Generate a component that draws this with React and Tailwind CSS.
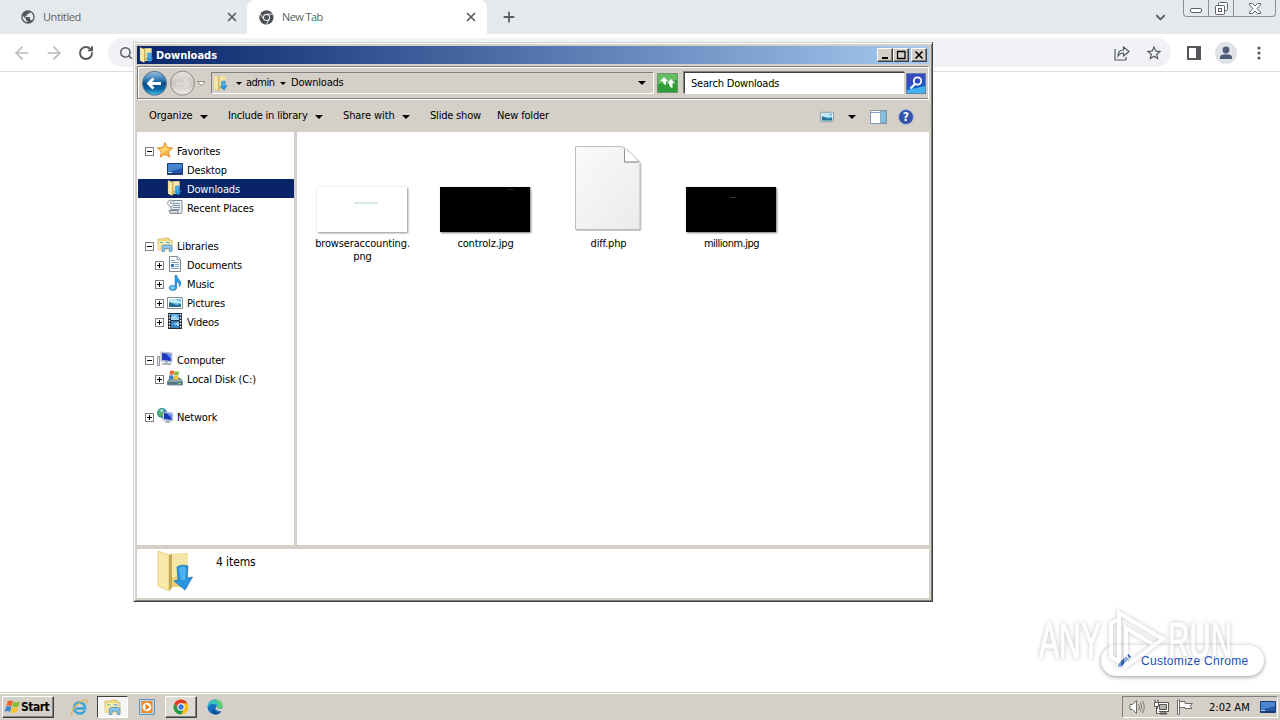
import { ArrowLeft, ArrowRight, ChevronDown, Plus, RotateCw, Search, X } from 'lucide-react';
import { MdOutlineStarBorder, MdPublic } from 'react-icons/md';

const tahoma = "font-['DejaVu_Sans_Condensed','DejaVu_Sans',sans-serif] [font-stretch:condensed]";

function FolderDownIcon({ className }) {
  return (
    <svg className={className} viewBox="0 0 36 42">
      <path d="M12 4L31 3V37H12Z" fill="#e8cf78" />
      <path d="M12 4L31 3V20L12 30Z" fill="#f5e6a8" />
      <path d="M1 1L12 5V41L1 36Z" fill="#f8e9a8" stroke="#dcc36f" strokeWidth="0.7" />
      <path d="M12 5L15 4V38L12 41Z" fill="#c2a856" />
      <path d="M20 17Q24 14 31 16L30 28L35.5 27L28 40L17 31L21 30Z" fill="#2796de" stroke="#1670b8" strokeWidth="0.7" />
      <path d="M22 18Q26 15 29 18L28 30L24 30Z" fill="#4fb3ef" />
    </svg>
  );
}

function LibraryIcon({ className }) {
  return (
    <svg className={className} viewBox="0 0 16 16">
      <path d="M1 2H6L7 1H12V3H15V13H1Z" fill="#f1d980" stroke="#caa94d" strokeWidth="0.6" />
      <path d="M2 4H14V7H2Z" fill="#fbf2c0" />
      <path d="M3 5H6V6H3Z" fill="#58b36b" />
      <path d="M9 5H13V6H9Z" fill="#5b9fdc" />
      <path d="M1 7H15V13H1Z" fill="#f5e49c" />
      <path d="M5 14.5V10Q5 8 7 8H13Q15 8 15 10V14.5H12.5V11.5H7.5V14.5Z" fill="#8cc5ea" stroke="#4489bd" strokeWidth="0.7" />
    </svg>
  );
}

function StarIcon() {
  return (
    <svg className="size-4" viewBox="0 0 16 16">
      <path d="M8 0.5L10.2 5.4L15.7 6L11.6 9.7L12.8 15.2L8 12.4L3.2 15.2L4.4 9.7L0.3 6L5.8 5.4Z" fill="#fdb844" stroke="#d9822b" strokeWidth="0.8" />
      <path d="M8 3L9.4 6.4L13 7L8 9L4.5 12L5.5 9L3 7L6.6 6.4Z" fill="#ffd97c" />
    </svg>
  );
}

function DesktopIcon() {
  return (
    <svg className="size-4" viewBox="0 0 16 16">
      <path d="M0.5 2.5H15.5V13.5H0.5Z" fill="#2458a8" stroke="#183b78" />
      <path d="M1 3H15V7L1 11Z" fill="#4a86cf" />
      <path d="M1 11H5V12H1Z" fill="#b9d8f5" />
      <path d="M1 12H15V13H1Z" fill="#1a3a6e" />
    </svg>
  );
}

function RecentIcon() {
  return (
    <svg className="size-4" viewBox="0 0 16 16">
      <path d="M4 1.5H15V12.5Q15 14.5 13 14.5H4Z" fill="#eef1f4" stroke="#7e8892" />
      <path d="M7 4.5H13M7 6.5H13M6 8.5H13M5 10.5H13" stroke="#7d95ad" />
      <path d="M2 11.5H11V14.5H3Z" fill="#d5d9dd" stroke="#7e8892" />
      <circle cx="3.8" cy="4.3" r="3.2" fill="#f5f7f9" stroke="#939da6" />
      <path d="M3.8 2.5V4.5H5.3" stroke="#60707f" fill="none" strokeWidth="0.8" />
    </svg>
  );
}

function DocumentIcon() {
  return (
    <svg className="size-4" viewBox="0 0 16 16">
      <path d="M2.5 0.5H10.5L13.5 3.5V15.5H2.5Z" fill="#fff" stroke="#7d8791" />
      <path d="M10 1V4H13" fill="#d9e1e8" stroke="#7d8791" strokeWidth="0.7" />
      <path d="M4 4.5H8M4 6.5H12M8 8.5H12M8 10.5H12M4 12.5H12" stroke="#7fa3c6" />
      <path d="M4 8H7V11H4Z" fill="#3b78b8" />
    </svg>
  );
}

function MusicIcon() {
  return (
    <svg className="size-4" viewBox="0 0 16 16">
      <path d="M8 0H9.5Q10 3 12.5 5Q15.5 8 12.5 12Q13 8 9.8 6.5V13Q9 16 5 15.5Q1 14.5 2.5 11.5Q4.5 9.5 8 11Z" fill="#2c9ae0" stroke="#196cae" strokeWidth="0.5" />
      <ellipse cx="5.5" cy="12.7" rx="2.4" ry="1.8" fill="#7ccaf5" />
    </svg>
  );
}

function PictureIcon({ className }) {
  return (
    <svg className={className} viewBox="0 0 16 14">
      <path d="M0.5 1.5H15.5V12.5H0.5Z" fill="#fff" stroke="#7f8d99" />
      <path d="M2 3H14V11H2Z" fill="#6ec2e6" />
      <path d="M2 3H8L14 6V7H2Z" fill="#bfe7f5" />
      <path d="M2 6Q6 7 9 9L14 8V11H2Z" fill="#246f92" />
    </svg>
  );
}

function VideoIcon() {
  return (
    <svg className="size-4" viewBox="0 0 16 16">
      <path d="M1 0H15V16H1Z" fill="#22303d" />
      <path d="M4 1H12V7H4Z" fill="#5fa8df" />
      <path d="M4 8H12V15H4Z" fill="#3b84c4" />
      <path d="M4 4L8 2L12 6V7H4ZM6 11L12 9V13Z" fill="#a3d2ef" />
      <path d="M2.5 1V16M13.5 1V16" stroke="#fff" strokeWidth="1.3" strokeDasharray="1.5 1.5" />
    </svg>
  );
}

function ComputerIcon() {
  return (
    <svg className="size-4" viewBox="0 0 16 16">
      <path d="M0.5 5.5H2.5V14.5H0.5Z" fill="#dfe3e8" stroke="#7c8590" strokeWidth="0.8" />
      <path d="M4 1L15 2V11L4 10Z" fill="#d9dde5" stroke="#8792a2" strokeWidth="0.6" />
      <path d="M5 2L14 3V10L5 9Z" fill="#1f36bd" />
      <path d="M9 2.5L14 3V8Z" fill="#6c8cf0" />
      <path d="M8 11H11V12H14V14H5V12H8Z" fill="#aeb6c1" />
    </svg>
  );
}

function FlagLogo({ className }) {
  return (
    <svg className={className} viewBox="0 0 18 16">
      <path d="M4 2Q7 0 9.4 2L8 7.2Q5 5.5 2.5 7.2Z" fill="#ee6330" />
      <path d="M10 2.5Q13 4 17 2L15.4 7.2Q12 9 8.6 7.5Z" fill="#84bd39" />
      <path d="M2.2 8Q5 6.5 7.8 8L6.4 13.2Q3.5 11.5 0.6 13.2Z" fill="#3c84d4" />
      <path d="M8.4 8.3Q11 10 15.2 8L13.6 13.4Q10 15 7 13.7Z" fill="#fac32d" />
    </svg>
  );
}

function DiskIcon() {
  return (
    <svg className="size-4" viewBox="0 0 16 16">
      <path d="M0.5 11.5L3 8H13L15.5 11.5V15H0.5Z" fill="#8fa5ad" stroke="#52666e" strokeWidth="0.7" />
      <path d="M1 12H15V14.5H1Z" fill="#4e7780" />
      <path d="M11 13H14V14H11Z" fill="#72e36d" />
      <path d="M3 1Q5 0 7 1L6.5 5Q4 4 2.5 5Z" fill="#f0642d" />
      <path d="M7.5 1Q10 2 12 1L11.5 5Q9 6 7 5Z" fill="#85bd43" />
      <path d="M2.3 5.5Q4 5 6.3 5.5L6 9.5Q4 9 2 9.5Z" fill="#3b7ed0" />
      <path d="M7 5.5Q9 6.5 11.4 5.6L11 9.5Q9 10 6.5 9.5Z" fill="#f8c434" />
    </svg>
  );
}

function NetworkIcon() {
  return (
    <svg className="size-4" viewBox="0 0 16 16">
      <circle cx="5" cy="5" r="5" fill="#3288b4" />
      <path d="M2 2Q4 0 7 1L5 4L7 6L4 9Q1 8 1 4Z" fill="#56b35f" />
      <path d="M3 2.5Q5 1 7 2L4.5 4.5Z" fill="#b6e3f0" />
      <path d="M6 4L15.5 5V13L6 12Z" fill="#dce1ea" stroke="#8693a3" strokeWidth="0.6" />
      <path d="M7 5L14.5 6V12L7 11Z" fill="#1938be" />
      <path d="M10 5.4L14.5 6V10Z" fill="#6b8ef2" />
      <path d="M9 13H13V15H8Z" fill="#a9b2be" />
    </svg>
  );
}

function ChromeLogo({ className, mono }) {
  return (
    <svg className={className} viewBox="0 0 16 16">
      <circle cx="8" cy="8" r="7.5" fill={mono ? '#4d5156' : '#fbc116'} />
      <path d="M1.5 4.3A7.5 7.5 0 0 1 14.5 4.3H8L4.9 9.8Z" fill={mono ? '#4d5156' : '#e33b2e'} />
      <path d="M1.5 4.3A7.5 7.5 0 0 0 7.9 15.5L11.2 9.8L4.9 9.8Z" fill={mono ? '#4d5156' : '#229a4b'} />
      {mono && <path d="M8 4.4H15M4.9 9.8L1.5 4.2M11.1 9.8L7.8 15.5" stroke="#fff" strokeWidth="0.9" />}
      <circle cx="8" cy="8" r="3.7" fill="#fff" />
      <circle cx="8" cy="8" r="2.7" fill={mono ? '#4d5156' : '#3577e5'} />
    </svg>
  );
}

function Caret({ className }) {
  return (
    <svg className={className} viewBox="0 0 8 4">
      <path d="M0 0H8L4 4Z" fill="#000" />
    </svg>
  );
}

function BrowserTabs() {
  return (
    <div className="flex h-[34px] bg-[#e6e9ec] text-[#5b5f64] font-['Open_Sans',sans-serif]">
      <div className="flex w-[247px] items-center pl-[20px] pr-[8px]">
        <MdPublic className="size-4 text-[#54585d]" />
        <span className="ml-[7px] flex-1 text-[11px] tracking-[-0.4px]">Untitled</span>
        <X className="size-[14px]" strokeWidth={3} />
      </div>
      <div className="flex w-[240px] items-center rounded-t-lg bg-white pl-[12px] pr-[9px]">
        <ChromeLogo mono className="size-[15px]" />
        <span className="ml-[8px] flex-1 text-[11px] tracking-[-0.6px]">New Tab</span>
        <X className="size-[14px]" strokeWidth={3} />
      </div>
      <div className="flex flex-1 items-center pl-[14px]">
        <Plus className="size-4" strokeWidth={2.7} />
        <ChevronDown className="ml-auto mr-[15px] size-[15px]" strokeWidth={3.2} />
      </div>
      <div className="mr-[4px] flex h-[17px] w-[93px] rounded-b-[4px] border border-t-0 border-[#8b9096] text-[#5d6268]">
        <div className="flex w-[25px] items-center justify-center border-r border-[#8b9096] pt-[5px]">
          <svg className="h-[5px] w-[12px]" viewBox="0 0 12 5">
            <rect x="0.5" y="0.5" width="11" height="4" rx="1.5" fill="#fff" stroke="currentColor" />
          </svg>
        </div>
        <div className="flex w-[25px] items-center justify-center border-r border-[#8b9096]">
          <svg className="size-[13px]" viewBox="0 0 13 13">
            <rect x="3.5" y="0.5" width="9" height="8" rx="1" fill="#fff" stroke="currentColor" />
            <rect x="0.5" y="3.5" width="9" height="9" rx="1" fill="#fff" stroke="currentColor" />
            <rect x="3.5" y="6.5" width="3" height="3" fill="none" stroke="currentColor" />
          </svg>
        </div>
        <div className="flex flex-1 items-center justify-center">
          <svg className="h-[11px] w-[12px]" viewBox="0 0 12 11">
            <path d="M0.5 0.5H3.5L6 3L8.5 0.5H11.5V2L8 5.5L11.5 9V10.5H8.5L6 8L3.5 10.5H0.5V9L4 5.5L0.5 2Z" fill="#fff" stroke="currentColor" />
          </svg>
        </div>
      </div>
    </div>
  );
}

function BrowserToolbar() {
  return (
    <div className="flex h-[38px] items-center border-b border-[#d9dbde] bg-white pl-[12px] text-[#54585d]">
      <ArrowLeft className="size-[20px] text-[#b9bbbe]" />
      <ArrowRight className="ml-[12px] size-[20px] text-[#b9bbbe]" />
      <RotateCw className="ml-[14px] size-[16px]" strokeWidth={2.8} />
      <div className="ml-[14px] flex h-[29px] w-[1063px] items-center rounded-full bg-[#f1f2f5] pl-[11px] pr-[8px]">
        <Search className="size-[14px]" strokeWidth={2.4} />
        <svg className="ml-auto size-[16px]" viewBox="0 0 16 16" fill="none" stroke="currentColor" strokeWidth="1.2">
          <path d="M1 4V15H12V12" />
          <path d="M4 11Q4 5 9.5 5V2L15 6.5L9.5 11V8Q6 8 4 11Z" />
        </svg>
        <MdOutlineStarBorder className="ml-[15px] size-[18px]" />
      </div>
      <svg className="ml-[16px] size-[14px]" viewBox="0 0 14 14">
        <path d="M1 1H13V13H1Z" fill="none" stroke="#54585d" strokeWidth="2" />
        <path d="M9 0H14V14H9Z" fill="#54585d" />
      </svg>
      <svg className="ml-[14px] size-[22px]" viewBox="0 0 22 22">
        <circle cx="11" cy="11" r="11" fill="#dfe2e6" />
        <circle cx="11" cy="8" r="3.4" fill="#4f5d78" />
        <path d="M5 17V15.5Q5 12.3 11 12.3Q17 12.3 17 15.5V17Z" fill="#4f5d78" />
      </svg>
      <svg className="ml-[20px] h-[14px] w-[4px]" viewBox="0 0 4 14" fill="#54585d">
        <circle cx="2" cy="2" r="1.6" />
        <circle cx="2" cy="7" r="1.6" />
        <circle cx="2" cy="12" r="1.6" />
      </svg>
    </div>
  );
}

function CaptionButton({ children }) {
  return (
    <div className="flex h-[14px] w-[16px] items-center justify-center border border-[#404040] border-l-white border-t-white bg-[#d4d0c8] shadow-[inset_-1px_-1px_#808080]">
      <svg className="h-[10px] w-[10px]" viewBox="0 0 10 10" fill="none" stroke="#000">{children}</svg>
    </div>
  );
}

function TitleBar() {
  return (
    <div className="flex h-[18px] items-center bg-gradient-to-r from-[#0a246a] to-[#a6caf0] pl-[2px] pr-[2px]">
      <FolderDownIcon className="h-[16px] w-[15px]" />
      <span className="ml-[2px] flex-1 text-[11px] font-bold leading-none text-white">Downloads</span>
      <CaptionButton><path d="M2 8H8" strokeWidth="2" /></CaptionButton>
      <CaptionButton><path d="M1 1.5H9M1.5 1V9M1 8.5H9.5M9 1V9" strokeWidth="1.3" /></CaptionButton>
      <div className="w-[2px]" />
      <CaptionButton><path d="M1.5 1.5L8.5 8.5M8.5 1.5L1.5 8.5" strokeWidth="1.6" /></CaptionButton>
    </div>
  );
}

function AddressRow() {
  return (
    <div className="mt-[2px] flex h-[34px] items-center border border-[#808080] border-b-white border-r-white pl-[3px] shadow-[inset_0_-1px_#808080,inset_1px_1px_#fff]">
      <svg className="h-[26px] w-[64px]" viewBox="0 0 64 26">
        <defs>
          <linearGradient id="back" x1="0" y1="0" x2="0" y2="1">
            <stop offset="0" stopColor="#9fc0dc" />
            <stop offset="0.4" stopColor="#2372ad" />
            <stop offset="0.5" stopColor="#0a4c89" />
            <stop offset="0.75" stopColor="#0d67a5" />
            <stop offset="1" stopColor="#45c8ee" />
          </linearGradient>
          <linearGradient id="forward" x1="0" y1="0" x2="0" y2="1">
            <stop offset="0" stopColor="#e9e7e3" />
            <stop offset="0.5" stopColor="#c9c6c1" />
            <stop offset="1" stopColor="#eeece9" />
          </linearGradient>
        </defs>
        <circle cx="13.5" cy="13.3" r="12" fill="url(#back)" stroke="#58768f" />
        <path d="M20 13.5H8M12.5 8.5L7.5 13.5L12.5 18.5" fill="none" stroke="#fff" strokeWidth="2.8" />
        <circle cx="41.5" cy="13.2" r="12" fill="url(#forward)" stroke="#8d8c8a" />
        <path d="M35 13.5H47M42.5 8.5L47.5 13.5L42.5 18.5" fill="none" stroke="#dedcd8" strokeWidth="2.5" />
        <path d="M56.5 11.5H64L60.2 15.5Z" fill="#fff" stroke="#77736d" strokeWidth="0.8" />
      </svg>
      <div className="ml-[6px] flex h-[22px] w-[443px] items-center border border-[#808080] border-b-white border-r-white pl-[1px] text-[11px]">
        <FolderDownIcon className="h-4 w-[15px]" />
        <Caret className="ml-[8px] h-[3px] w-[6px]" />
        <span className="ml-[4px] w-[28px] tracking-[-0.5px]">admin</span>
        <Caret className="ml-[6px] h-[3px] w-[6px]" />
        <span className="ml-[5px] tracking-[-0.2px]">Downloads</span>
        <Caret className="ml-auto mr-[7px] h-[4px] w-[8px]" />
      </div>
      <svg className="ml-[3px] h-[20px] w-[21px]" viewBox="0 0 21 20">
        <path d="M0.5 0.5H20.5V19.5H0.5Z" fill="#2f9d38" stroke="#6f936f" />
        <path d="M1 1H20V7L1 11Z" fill="#63bd63" />
        <path d="M7 4L3 8H5.8Q6 11.5 9 12V8H11Z" fill="#fff" />
        <path d="M14 6L18.2 10.3H15.5V15Q12 14.5 12 10.3H9.8Z" fill="#fff" />
      </svg>
      <div className="ml-[6px] flex h-[22px] w-[221px] items-center border border-[#404040] border-b-white border-r-[#d4d0c8] bg-white pl-[6px] pt-[2px] text-[11px] shadow-[-1px_-1px_#808080]">
        <span className="tracking-[-0.2px]">Search Downloads</span>
      </div>
      <svg className="ml-[1px] h-[21px] w-[20px]" viewBox="0 0 20 21">
        <path d="M0.5 0.5H19.5V20.5H0.5Z" fill="#1d58c5" stroke="#5d83b4" />
        <path d="M1 1H19V6L1 13Z" fill="#3949bd" />
        <path d="M1 17L19 13V20H1Z" fill="#44b1ee" />
        <circle cx="11.5" cy="8" r="3.7" fill="none" stroke="#fff" strokeWidth="1.8" />
        <path d="M9 11L4.5 15.5" stroke="#fff" strokeWidth="2.2" />
      </svg>
    </div>
  );
}

function CommandBar() {
  return (
    <div className="flex h-[31px] items-center pl-[12px] pr-[15px] pt-[2px] text-[11px] whitespace-nowrap">
      <span className="w-[51px] tracking-[-0.1px]">Organize</span>
      <Caret className="h-[4px] w-[8px]" />
      <span className="ml-[20px] w-[87px] tracking-[-0.2px]">Include in library</span>
      <Caret className="h-[4px] w-[8px]" />
      <span className="ml-[20px] w-[59px] tracking-[-0.1px]">Share with</span>
      <Caret className="h-[4px] w-[8px]" />
      <span className="ml-[20px] w-[67px] tracking-[-0.2px]">Slide show</span>
      <span className="tracking-[-0.15px]">New folder</span>
      <PictureIcon className="ml-auto h-[12px] w-[14px]" />
      <Caret className="ml-[14px] h-[4px] w-[8px]" />
      <svg className="ml-[14px] h-[14px] w-[17px]" viewBox="0 0 17 14">
        <path d="M0.5 0.5H16.5V13.5H0.5Z" fill="#fff" stroke="#7f97b0" />
        <path d="M1 2.5H11" stroke="#7ea6cc" />
        <path d="M10.5 1H16V13H10.5Z" fill="#86c2df" stroke="#7f97b0" strokeWidth="0.7" />
      </svg>
      <div className="ml-[11px] flex size-[16px] items-center justify-center rounded-full border border-[#aab7dc] bg-[#3453ad] text-[12px] font-bold leading-none text-white">?</div>
    </div>
  );
}

const treeIcons = {
  star: <StarIcon />,
  desktop: <DesktopIcon />,
  downloads: <FolderDownIcon className="h-4 w-[15px]" />,
  recent: <RecentIcon />,
  library: <LibraryIcon className="size-4" />,
  document: <DocumentIcon />,
  music: <MusicIcon />,
  picture: <PictureIcon className="mt-[2px] h-[14px] w-4" />,
  video: <VideoIcon />,
  computer: <ComputerIcon />,
  disk: <DiskIcon />,
  network: <NetworkIcon />,
};

const tree = [
  [
    { label: 'Favorites', icon: 'star', toggle: 'open' },
    { label: 'Desktop', icon: 'desktop', child: true },
    { label: 'Downloads', icon: 'downloads', child: true, selected: true },
    { label: 'Recent Places', icon: 'recent', child: true },
  ],
  [
    { label: 'Libraries', icon: 'library', toggle: 'open' },
    { label: 'Documents', icon: 'document', child: true, toggle: 'closed' },
    { label: 'Music', icon: 'music', child: true, toggle: 'closed' },
    { label: 'Pictures', icon: 'picture', child: true, toggle: 'closed' },
    { label: 'Videos', icon: 'video', child: true, toggle: 'closed' },
  ],
  [
    { label: 'Computer', icon: 'computer', toggle: 'open' },
    { label: 'Local Disk (C:)', icon: 'disk', child: true, toggle: 'closed' },
  ],
  [{ label: 'Network', icon: 'network', toggle: 'closed' }],
];

function TreeRow({ item }) {
  return (
    <div className={`flex h-[19px] items-center ${item.child ? 'pl-[17px]' : 'pl-[7px]'} ${item.selected ? 'bg-[#0a246a] text-white' : ''}`}>
      <div className="w-[9px] pt-px">
        {item.toggle && (
          <svg className="block size-[9px]" viewBox="0 0 9 9" shapeRendering="crispEdges">
            <path d="M0.5 0.5H8.5V8.5H0.5Z" fill="#fff" stroke="#808080" />
            <path d={item.toggle === 'open' ? 'M2 4.5H7' : 'M2 4.5H7M4.5 2V7'} stroke="#000" />
          </svg>
        )}
      </div>
      <div className="ml-[3px] w-[20px] -mt-px">{treeIcons[item.icon]}</div>
      <span className="pt-[3px] text-[11px] leading-[14px] tracking-[-0.15px]">{item.label}</span>
    </div>
  );
}

function NavPane() {
  return (
    <div className="flex w-[157px] flex-col gap-[19px] bg-white pl-px pt-[9px]">
      {tree.map((group) => (
        <div key={group[0].label}>
          {group.map((item) => <TreeRow key={item.label} item={item} />)}
        </div>
      ))}
    </div>
  );
}

function FileItem({ name, children }) {
  return (
    <div className="flex w-[123px] flex-col items-center">
      <div className="flex h-[100px] items-end pr-px">{children}</div>
      <div className="mt-[5px] text-center text-[11px] leading-[13px] tracking-[-0.15px]">{name}</div>
    </div>
  );
}

function FilesPane() {
  return (
    <div className="flex flex-1 bg-white pl-[4px]">
      <FileItem name={<>browseraccounting.<br />png</>}>
        <div className="flex h-[45px] w-[90px] justify-center bg-white pt-[15px] shadow-[0_0_1px_#ccc,1px_1px_2px_#888]">
          <div className="ml-[8px] h-[2px] w-[24px] bg-[#d5e8ea]" />
        </div>
      </FileItem>
      <FileItem name="controlz.jpg">
        <div className="flex h-[45px] w-[90px] justify-end bg-black pr-[16px] pt-[2px] shadow-[1px_1px_2px_#777]">
          <div className="h-px w-[7px] bg-[#252525]" />
        </div>
      </FileItem>
      <FileItem name="diff.php">
        <svg className="h-[87px] w-[68px]" viewBox="0 0 68 87">
          <defs>
            <linearGradient id="paper" x1="0" y1="0" x2="1" y2="1">
              <stop offset="0" stopColor="#fafafa" />
              <stop offset="1" stopColor="#ebebeb" />
            </linearGradient>
          </defs>
          <path d="M1.5 1.5H47Q53 3 66 17V84.5H1.5Z" fill="url(#paper)" stroke="#bdbdbd" />
          <path d="M2.5 85.2H66.8V18" fill="none" stroke="#b5b5b5" />
          <path d="M50.5 3V17H65Q60 9 50.5 3Z" fill="#fff" stroke="#c4c4c4" />
          <path d="M50.5 5V17H64" fill="none" stroke="#8f8f8f" />
        </svg>
      </FileItem>
      <FileItem name={<span className="tracking-[-0.5px]">millionm.jpg</span>}>
        <div className="flex h-[45px] w-[90px] justify-center bg-black pt-[10px] shadow-[1px_1px_2px_#777]">
          <div className="ml-[4px] h-px w-[6px] bg-[#383838]" />
        </div>
      </FileItem>
    </div>
  );
}

function ExplorerWindow() {
  return (
    <div className={`absolute left-[133px] top-[42px] flex h-[560px] w-[800px] flex-col border border-[#404040] border-l-[#d4d0c8] border-t-[#d4d0c8] bg-[#d4d0c8] p-[3px] text-black shadow-[inset_1px_1px_#fff,inset_-1px_-1px_#808080] ${tahoma}`}>
      <TitleBar />
      <AddressRow />
      <CommandBar />
      <div className="mt-[1px] flex h-[413px] gap-[3px]">
        <NavPane />
        <FilesPane />
      </div>
      <div className="mt-[4px] flex h-[49px] bg-white pl-[20px]">
        <FolderDownIcon className="mt-[1px] h-[42px] w-[36px]" />
        <span className="ml-[23px] mt-[4px] text-[12px] tracking-[-0.1px]">4 items</span>
      </div>
    </div>
  );
}

function Watermark() {
  return (
    <svg className="absolute left-[1034px] top-[604px] h-[76px] w-[246px] opacity-50 drop-shadow-[0_0_2px_#888]" viewBox="0 0 246 76">
      <g fontFamily="Liberation Sans" fontSize="50" fill="#fff" stroke="#fff" strokeWidth="1">
        <text x="5" y="54" textLength="62" lengthAdjust="spacingAndGlyphs">ANY</text>
        <text x="134" y="54" textLength="64" lengthAdjust="spacingAndGlyphs">RUN</text>
      </g>
      <path d="M86 15L77 19V53L84 57M85 64V9L129 35L92 62V24L120 41" fill="none" stroke="#fff" strokeWidth="4" />
    </svg>
  );
}

function CustomizeButton() {
  return (
    <div className="absolute left-[1101px] top-[645px] flex h-[31px] w-[163px] items-center rounded-full bg-white pl-[17px] shadow-[0_1px_4px_#999]">
      <svg className="size-[13px]" viewBox="0 0 13 13" fill="#1450b4">
        <path d="M0 10.3L8 2.3L10.7 5L2.7 13H0ZM9 1.3L10.3 0L13 2.7L11.7 4Z" />
      </svg>
      <span className="ml-[10px] font-['Liberation_Sans',sans-serif] text-[12px] tracking-[0.3px] whitespace-nowrap text-[#1450b4]">Customize Chrome</span>
    </div>
  );
}

function Taskbar() {
  return (
    <div className={`flex h-[28px] items-center border-t border-[#c8c6c1] bg-[#d4d0c8] pl-[2px] pr-[2px] pt-[1px] shadow-[inset_0_1px_#fff] ${tahoma}`}>
      <div className="flex h-[22px] w-[52px] items-center border border-[#404040] border-l-white border-t-white pl-px shadow-[inset_-1px_-1px_#808080]">
        <FlagLogo className="h-[16px] w-[17px]" />
        <span className="text-[12px] font-bold tracking-[-0.5px]">Start</span>
      </div>
      <svg className="ml-[17px] size-[17px]" viewBox="0 0 17 17">
        <path d="M14 11.5Q12 15 8 14.5Q3 13.5 3 8.5Q4 3.5 9 3.5Q14 4 14 9.5H5" fill="none" stroke="#38a5dc" strokeWidth="2.4" />
        <path d="M1 16Q-1 12 6 5.5Q13 0 16 1Q17 2 15 5" fill="none" stroke="#e1b749" strokeWidth="1.2" />
      </svg>
      <div className="ml-[9px] flex h-[22px] w-[31px] items-center justify-center border border-[#404040] border-b-white border-r-white bg-[#f7f6f4]">
        <LibraryIcon className="size-[17px]" />
      </div>
      <svg className="ml-[11px] size-[16px]" viewBox="0 0 16 16">
        <path d="M0.5 0.5H15.5V15.5H0.5Z" fill="#bad6ed" stroke="#6292bc" />
        <path d="M2.5 2H13.5V14H2.5Z" fill="#f08b22" />
        <circle cx="8" cy="8" r="4.3" fill="#fff" />
        <path d="M6.5 5L11 8L6.5 11Z" fill="#e4781a" />
      </svg>
      <div className="ml-[10px] flex h-[22px] w-[32px] items-center justify-center border border-[#404040] border-l-white border-t-white bg-[#dedbd5] shadow-[inset_-1px_-1px_#808080]">
        <ChromeLogo className="size-[16px]" />
      </div>
      <svg className="ml-[10px] size-[16px]" viewBox="0 0 16 16">
        <circle cx="8" cy="8" r="7.5" fill="#1573c4" />
        <path d="M0.8 7Q2 0.5 8.5 0.5Q15.5 1 15.5 7Q15 10 11 9.8Q9 9.5 10 8Q10 5 6 5Q2 5 0.8 9Z" fill="#37c0bd" />
        <path d="M8 0.5Q15.5 1 15.5 7Q15 10 11 9.8Q13 4 8 0.5Z" fill="#65cf65" />
        <path d="M10.5 6.5Q9.5 9.5 11.5 10Q15 10.5 15.7 8L16 12L13 12.5Q9 11.5 8.5 9Z" fill="#d4d0c8" />
        <path d="M6 8Q5 12 11 13Q13.5 13 14.5 12Q12 16 8 15.5Q3 14 6 8Z" fill="#104d98" />
      </svg>
      <div className="ml-auto flex h-[22px] w-[156px] items-center border border-[#808080] border-b-white border-r-white pl-[6px]">
        <svg className="h-4 w-[16px]" viewBox="0 0 16 16" fill="#fff" stroke="#6e6c68">
          <path d="M1 5.5H3.5L7.5 1.5V14.5L3.5 10.5H1Z" />
          <path d="M9.5 5Q11.5 8 9.5 11M11.5 3.5Q14 8 11.5 12.5M13.5 2Q17 8 13.5 14" fill="none" strokeWidth="0.9" />
        </svg>
        <svg className="ml-[8px] h-4 w-[16px]" viewBox="0 0 16 16" fill="#fff" stroke="#575653">
          <path d="M4.5 3.5H15.5V12.5H4.5Z" />
          <path d="M6.5 5.5H13.5V10.5H6.5Z" fill="#b5b3ae" />
          <path d="M7 14.5H14" strokeWidth="2" />
          <path d="M1.5 3.5H5.5V7.5H1.5ZM2 0.5V3M5 0.5V3M3.5 8V14.5H7" />
        </svg>
        <svg className="ml-[8px] h-4 w-[16px]" viewBox="0 0 16 16" fill="#fff" stroke="#6e6c68">
          <path d="M0.5 1V15.5H2.5V1ZM2.5 2.5H8V4.5H15.5L13 7L15 9.5H8V8.5H2.5Z" />
        </svg>
        <span className="ml-[16px] w-[51px] pt-[2px] text-[11px] whitespace-nowrap">2:02 AM</span>
        <DesktopIcon />
      </div>
    </div>
  );
}

export default function App() {
  return (
    <div className="relative flex h-[720px] w-[1280px] flex-col overflow-hidden bg-white">
      <BrowserTabs />
      <BrowserToolbar />
      <main className="flex-1" />
      <Taskbar />
      <ExplorerWindow />
      <CustomizeButton />
      <Watermark />
    </div>
  );
}
